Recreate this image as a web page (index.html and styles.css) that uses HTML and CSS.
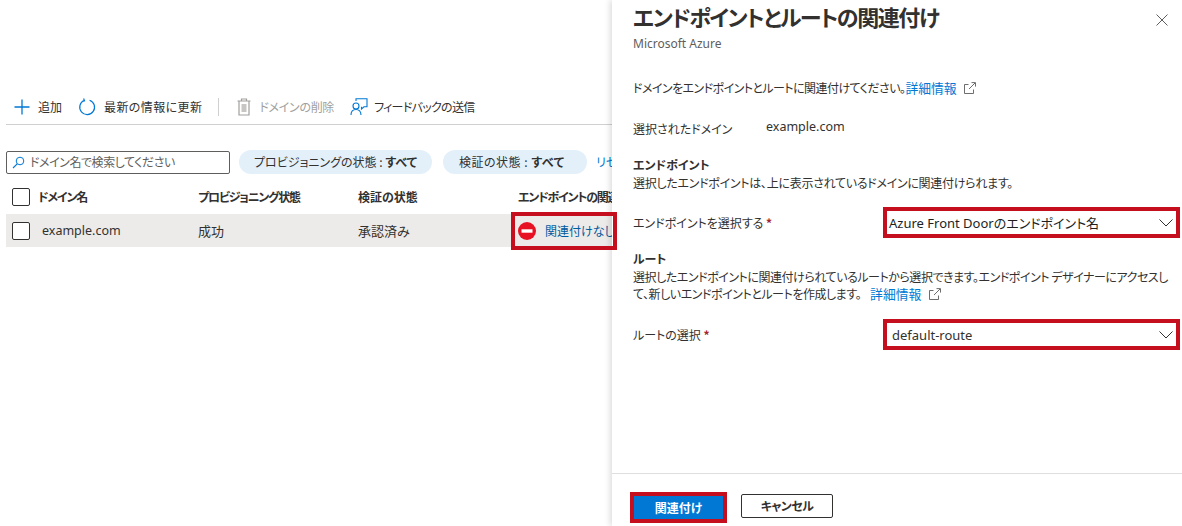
FILE: index.html
```html
<!DOCTYPE html>
<html lang="ja">
<head>
<meta charset="utf-8">
<title>エンドポイントとルートの関連付け</title>
<link rel="stylesheet" href="styles.css">
</head>
<body>
<div class="app">
  <main class="main">
    <div class="toolbar">
      <span class="tool">
        <svg class="ico" width="16" height="18" viewBox="0 0 16 18"><path d="M8 1.500v15M.5 9h15" fill="none" stroke="#0078d4" stroke-width="1.300"/></svg>
        追加
      </span>
      <span class="tool tool-wide">
        <svg class="ico" width="18" height="18" viewBox="0 0 18 18"><path d="M6.200 2.400A7.400 7.400 0 1 0 11.600 2.200M5.600 0.600l.9 2.200-2.300.7" fill="none" stroke="#0078d4" stroke-width="1.200"/></svg>
        最新の情報に更新
      </span>
      <span class="tool-sep"></span>
      <span class="tool tool-off">
        <svg class="ico" width="16" height="18" viewBox="0 0 16 18"><path d="M5.500 2.500v-1.500h5v1.500M1.500 3h13M3 3v14h10V3" fill="none" stroke="#a19f9d" stroke-width="1.200"/><path d="M5.500 6h5v8h-5z" fill="#c8c6c4"/></svg>
        ドメインの削除
      </span>
      <span class="tool tool-narrow">
        <svg class="ico" width="18" height="18" viewBox="0 0 18 18"><path d="M6 3V.8h11v8h-3l-2.500 2.200V8.800" fill="none" stroke="#0078d4" stroke-width="1.100"/><circle cx="6" cy="8" r="3" fill="#fff" stroke="#0078d4" stroke-width="1.100"/><path d="M1 17c0-3.500 2-5.500 5-5.500s5 2 5 5.500" fill="none" stroke="#0078d4" stroke-width="1.100"/></svg>
        フィードバックの送信
      </span>
    </div>

    <div class="filters">
      <div class="search">
        <svg class="search-ico" width="13" height="13" viewBox="0 0 13 13"><circle cx="8" cy="5" r="3.800" fill="none" stroke="#0078d4"/><path d="M5.200 7.800L1 12" stroke="#0078d4" stroke-width="1.100"/></svg>
        <span>ドメイン名で検索してください</span>
      </div>
      <span class="pill">プロビジョニングの状態 : <b>すべて</b></span>
      <span class="pill pill-short">検証の状態 : <b>すべて</b></span>
      <span class="reset">リセット</span>
    </div>

    <div class="thead grid">
      <span class="check"></span>
      <span class="name tight">ドメイン名</span>
      <span class="tight">プロビジョニング状態</span>
      <span>検証の状態</span>
      <span class="tight">エンドポイントの関連付け</span>
    </div>
    <div class="trow grid">
      <span class="check"></span>
      <span class="name latin">example.com</span>
      <span>成功</span>
      <span>承認済み</span>
      <span class="assoc">
        <svg width="18" height="18" viewBox="0 0 18 18"><circle cx="9" cy="9" r="9" fill="#e81123"/><rect x="3.500" y="7.300" width="11" height="3.400" fill="#fff"/></svg>
        <span class="link-dark">関連付けなし</span>
      </span>
    </div>
  </main>

  <aside class="panel">
    <header class="panel-head">
      <div>
        <h1 class="title">エンドポイントとルートの関連付け</h1>
        <div class="subtitle">Microsoft Azure</div>
      </div>
      <svg class="close" width="12" height="12" viewBox="0 0 12 12"><path d="M.5.500l11 11M11.500.500l-11 11" stroke="#605e5c" fill="none"/></svg>
    </header>

    <div class="panel-body">
      <p class="intro"><span class="intro-text">ドメインをエンドポイントとルートに関連付けてください。</span><a class="link">詳細情報</a>
        <svg class="ext" width="12" height="12" viewBox="0 0 12 12"><path d="M4.500 2.500H.5v9h9v-4M5 7l6-6M7.500.6h4v4" fill="none" stroke="#605e5c" stroke-width=".9"/></svg>
      </p>
      <div class="selected"><span class="selected-label">選択されたドメイン</span><span class="latin selected-value">example.com</span></div>

      <h2 class="sec sec-endpoint">エンドポイント</h2>
      <p class="desc">選択したエンドポイントは、上に表示されているドメインに関連付けられます。</p>
      <div class="field field-endpoint">
        <span>エンドポイントを選択する <i class="req">*</i></span>
        <div class="select">
          <span class="latin dark">Azure Front Doorのエンドポイント名</span>
          <svg width="14" height="8" viewBox="0 0 14 8"><path d="M.5.500L7 7l6.500-6.500" fill="none" stroke="#323130"/></svg>
        </div>
      </div>

      <h2 class="sec sec-route">ルート</h2>
      <p class="desc desc-wide">選択したエンドポイントに関連付けられているルートから選択できます。エンドポイント デザイナーにアクセスして、新しいエンドポイントとルートを作成します。<a class="link">詳細情報</a>
        <svg class="ext" width="12" height="12" viewBox="0 0 12 12"><path d="M4.500 2.500H.5v9h9v-4M5 7l6-6M7.500.6h4v4" fill="none" stroke="#605e5c" stroke-width=".9"/></svg>
      </p>
      <div class="field field-route">
        <span>ルートの選択 <i class="req">*</i></span>
        <div class="select select-route">
          <span class="latin">default-route</span>
          <svg width="14" height="8" viewBox="0 0 14 8"><path d="M.5.500L7 7l6.500-6.500" fill="none" stroke="#323130"/></svg>
        </div>
      </div>
    </div>

    <footer class="panel-foot">
      <button class="btn btn-primary">関連付け</button>
      <button class="btn btn-cancel">キャンセル</button>
    </footer>
  </aside>

  <div class="callout"></div>
</div>
</body>
</html>
```

FILE: styles.css
```css
* { box-sizing: border-box; }
html, body { margin: 0; height: 100%; overflow: hidden; background: #fff; }
body {
  font-family: "Noto Sans CJK JP", "Noto Sans", sans-serif;
  font-size: 12px;
  line-height: 16px;
  color: #323130;
  font-feature-settings: "palt";
}
.latin { font-family: "Noto Sans", "Noto Sans CJK JP", sans-serif; font-size: 13px; }
.app { position: relative; display: flex; width: 1182px; height: 526px; }

/* left list */
.main { flex: none; width: 612px; padding: 90px 0 0 6px; overflow: hidden; }
.toolbar { display: flex; align-items: center; height: 35px; border-bottom: 1px solid #d2d0ce; padding-bottom: 1px; }
.tool { display: flex; flex: none; align-items: center; gap: 8px; margin-right: 16px; white-space: nowrap; }
.tool:first-child { margin-left: 8px; }
.tool-wide { letter-spacing: .4px; gap: 8px; }
.tool-narrow { letter-spacing: -.7px; gap: 6px; }
.tool-off { color: #a19f9d; letter-spacing: -.3px; gap: 7px; }
.tool-sep { flex: none; width: 1px; height: 18px; background: #d2d0ce; margin-right: 17px; }
.filters { display: flex; align-items: center; margin-top: 25px; height: 24px; white-space: nowrap; }
.search { flex: none; display: flex; align-items: center; gap: 5px; width: 224px; height: 23px; border: 1px solid #605e5c; border-radius: 2px; padding-left: 5px; color: #605e5c; }
.search span { letter-spacing: -.45px; }
.pill { flex: none; display: block; height: 24px; line-height: 24px; border-radius: 12px; background: #e3f0fa; padding: 0 15px; margin-left: 9px; }
.pill-short { padding: 0 16px; letter-spacing: .5px; margin-left: 11px; width: 144px; }
.pill b { font-weight: 700; }
.reset { flex: none; margin-left: 9px; color: #0078d4; }
.grid { display: grid; grid-template-columns: 26px 160px 160px 160px 1fr; white-space: nowrap; }
.thead { height: 40px; padding-top: 14px; font-weight: 700; line-height: 18px; align-items: start; }
.thead .name { margin-left: 6px; }
.tight { letter-spacing: -1.200px; }
.trow { height: 33px; background: #edebe9; align-items: center; font-size: 13px; }
.trow .name { margin-left: 10px; margin-top: 1px; font-size: 12.500px; }
.thead > span:nth-child(n+3), .trow > span:nth-child(n+3) { margin-left: 6px; }
.check { width: 18px; height: 18px; border: 1px solid #323130; border-radius: 2px; background: #fff; margin-left: 6px; }
.assoc { display: flex; align-items: center; gap: 9px; }
.link-dark { color: #005a9e; font-size: 12px; }

/* panel */
.panel { position: relative; flex: none; width: 570px; height: 526px; background: #fff; box-shadow: -2px 0 6px rgba(0,0,0,.14); display: flex; flex-direction: column; }
.panel-head { display: flex; justify-content: space-between; padding: 2px 14px 0 21px; height: 67px; }
.title { margin: 0; font-size: 22px; line-height: 28px; font-weight: 700; color: #323130; letter-spacing: -1.450px; }
.subtitle { font-family: "Noto Sans", sans-serif; font-size: 12px; line-height: 16px; color: #605e5c; margin-top: 6px; }
.close { margin-top: 12px; }
.panel-body { flex: 1; padding: 0 14px 0 21px; }
.panel-body p { margin: 0; }
.panel-body .intro { margin-top: 13px; }
.intro-text { letter-spacing: -.55px; }
.link { color: #0078d4; font-size: 12.800px; letter-spacing: 0; }
.ext { vertical-align: -1px; margin-left: 5px; }
.selected { display: flex; margin-top: 24px; }
.selected-label { width: 133px; margin-top: 1px; }
.selected-value { margin-top: -1px; font-size: 12.500px; }
.sec { margin: 0; font-size: 12px; line-height: 16px; font-weight: 700; }
.sec-endpoint { margin-top: 20px; }
.panel-body .desc { line-height: 17px; letter-spacing: -.28px; margin-top: 1px; }
.panel-body .desc-wide { margin-top: 1px; letter-spacing: -.45px; }
.desc-wide .link { margin-left: 9px; }
.field { display: flex; align-items: center; justify-content: space-between; height: 31px; }
.field-endpoint { margin-top: 16px; margin-right: -12px; }
.req { color: #a4262c; font-style: normal; font-weight: 700; }
.select { display: flex; align-items: center; justify-content: space-between; width: 297px; height: 31px; border: 4px solid #c50f1f; background: #fff; padding: 0 3px 0 2px; }
.select-route { padding-left: 5px; }
.dark { color: #201f1e; }
.sec-route { margin-top: 13px; }
.field-route { margin-top: 17px; margin-right: -12px; }
.panel-foot { display: flex; align-items: center; gap: 14px; height: 53px; border-top: 1px solid #e1dfdd; padding-left: 18px; padding-top: 15px; }
.btn { font: inherit; font-weight: 700; font-feature-settings: "palt"; cursor: default; padding: 0; }
.btn-primary { width: 97px; height: 31px; background: #0078d4; color: #fff; border: 4px solid #c50f1f; }
.btn-cancel { width: 92px; height: 24px; background: #fff; color: #323130; border: 1px solid #323130; border-radius: 2px; letter-spacing: -.6px; margin-bottom: 3px; }

/* annotation over the row and the panel edge */
.callout { position: absolute; left: 511px; top: 212px; width: 106px; height: 38px; border: 4px solid #c50f1f; }
```
